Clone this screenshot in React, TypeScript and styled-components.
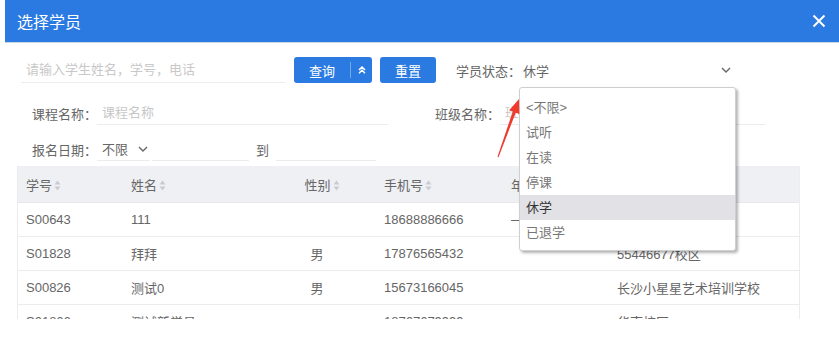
import styled, { createGlobalStyle } from "styled-components";

const GlobalStyle = createGlobalStyle`
  html, body {
    margin: 0;
    background: #fff;
  }
  body {
    font-family: "Liberation Sans", "Noto Sans CJK SC", sans-serif;
    font-size: 13px;
    color: #666;
  }
`;

const BLUE = "#2a7ae2";

const Modal = styled.div`
  position: relative;
  margin-left: 5px;
  height: 342px;
  overflow: hidden;
`;

const Header = styled.div`
  height: 42px;
  background: ${BLUE};
  border-bottom: 1px solid #c9d6e8;
  display: flex;
  align-items: center;
  justify-content: space-between;
  padding: 0 13px 0 12px;
`;

const Title = styled.div`
  color: #fff;
  font-size: 16px;
`;

const CloseBtn = styled.button`
  border: 0;
  background: none;
  padding: 0;
  display: flex;
  cursor: pointer;
`;

const Body = styled.div`
  padding: 14px 39px 0 12px;
`;

const Row = styled.div<{ $top?: number; $h?: number }>`
  display: flex;
  align-items: center;
  height: ${(p) => p.$h ?? 24}px;
  margin-top: ${(p) => p.$top ?? 0}px;
`;

const LineInput = styled.input<{ $w: number; $ml?: number }>`
  box-sizing: border-box;
  width: ${(p) => p.$w}px;
  height: 100%;
  margin-left: ${(p) => p.$ml ?? 0}px;
  border: 0;
  border-bottom: 1px solid #ececec;
  outline: none;
  padding: 0 5px;
  font: inherit;
  color: #666;
  background: transparent;
  &::placeholder {
    color: #c8c8c8;
  }
`;

const Btn = styled.button<{ $w: number; $ml: number }>`
  box-sizing: border-box;
  width: ${(p) => p.$w}px;
  height: 26px;
  margin-left: ${(p) => p.$ml}px;
  border: 0;
  border-radius: 3px;
  background: ${BLUE};
  color: #fff;
  font: inherit;
  display: flex;
  align-items: center;
  justify-content: center;
  padding: 0;
  cursor: pointer;
`;

const BtnText = styled.span`
  flex: 1;
  text-align: center;
`;

const BtnDivider = styled.span`
  width: 1px;
  height: 16px;
  background: rgba(255, 255, 255, 0.35);
`;

const BtnIcon = styled.span`
  width: 21px;
  display: flex;
  justify-content: center;
`;

const StatusLabel = styled.span`
  margin-left: 20px;
  color: #666;
  white-space: nowrap;
`;

const StatusSelect = styled.div`
  width: 218px;
  margin-left: -2px;
  display: flex;
  align-items: center;
  justify-content: space-between;
  padding: 0 6px 0 4px;
  box-sizing: border-box;
  color: #666;
`;

const FieldLabel = styled.span<{ $ml?: number }>`
  width: 80px;
  margin-left: ${(p) => p.$ml ?? 0}px;
  text-align: right;
  white-space: nowrap;
  color: #666;
`;

const DateSelect = styled.div`
  box-sizing: border-box;
  width: 53px;
  height: 100%;
  border-bottom: 1px solid #ececec;
  display: flex;
  align-items: center;
  gap: 10px;
  padding-left: 5px;
`;

const ToText = styled.span`
  margin: 0 7px;
`;

const TableWrap = styled.div`
  margin-top: 5px;
  height: 153px;
  overflow: hidden;
  border-left: 1px solid #ececec;
  border-right: 1px solid #ececec;
`;

const Table = styled.table`
  width: 100%;
  table-layout: fixed;
  border-collapse: collapse;
`;

const Th = styled.th<{ $center?: boolean }>`
  height: 36px;
  background: #eef0f4;
  font-weight: normal;
  color: #666;
  text-align: ${(p) => (p.$center ? "center" : "left")};
  padding: ${(p) => (p.$center ? "0 23px 0 10px" : "0 0 0 8px")};
  border-bottom: 1px solid #e8e8e8;
  white-space: nowrap;
  overflow: hidden;
`;

const Td = styled.td<{ $center?: boolean }>`
  height: 33px;
  text-align: ${(p) => (p.$center ? "center" : "left")};
  padding: ${(p) => (p.$center ? "0 23px 0 0" : "0 0 0 8px")};
  border-bottom: 1px solid #ececec;
  white-space: nowrap;
  overflow: hidden;
  color: #666;
`;

const SortMark = styled.svg`
  margin-left: 2px;
  vertical-align: -1px;
`;

const Dropdown = styled.ul`
  position: absolute;
  left: 514px;
  top: 87px;
  width: 217px;
  box-sizing: border-box;
  margin: 0;
  padding: 7px 0 5px;
  list-style: none;
  background: #fff;
  border: 1px solid #cfcfcf;
  border-radius: 3px;
  box-shadow: 2px 2px 3px rgba(0, 0, 0, 0.3);
`;

const Option = styled.li<{ $active?: boolean }>`
  height: 25px;
  line-height: 25px;
  padding-left: 6px;
  color: ${(p) => (p.$active ? "#333" : "#777")};
  background: ${(p) => (p.$active ? "#e2e1e6" : "transparent")};
`;

const Arrow = styled.svg`
  position: absolute;
  left: 488px;
  top: 95px;
`;

const Chevron = ({ color = "#666" }: { color?: string }) => (
  <svg width="10" height="6" viewBox="0 0 10 6">
    <path d="M1 1 L5 5 L9 1" fill="none" stroke={color} strokeWidth="1.4" />
  </svg>
);

const Sort = () => (
  <SortMark width="7" height="11" viewBox="0 0 7 11">
    <path d="M3.5 0.5 L6.5 4.5 L0.5 4.5 Z" fill="#c8cbd2" />
    <path d="M3.5 10.5 L6.5 6.5 L0.5 6.5 Z" fill="#c8cbd2" />
  </SortMark>
);

const columns = [
  { key: "no", label: "学号", w: 105 },
  { key: "name", label: "姓名", w: 158 },
  { key: "sex", label: "性别", w: 95, center: true },
  { key: "phone", label: "手机号", w: 127 },
  { key: "grade", label: "年级", w: 106 },
  { key: "campus", label: "所属校区" },
] as const;

const rows = [
  { no: "S00643", name: "111", sex: "", phone: "18688886666", grade: "—", campus: "" },
  { no: "S01828", name: "拜拜", sex: "男", phone: "17876565432", grade: "", campus: "55446677校区" },
  { no: "S00826", name: "测试0", sex: "男", phone: "15673166045", grade: "", campus: "长沙小星星艺术培训学校" },
  { no: "S01866", name: "测试新学员", sex: "", phone: "18767679999", grade: "", campus: "华南校区" },
];

const statusOptions = ["<不限>", "试听", "在读", "停课", "休学", "已退学"];

export default function App() {
  return (
    <>
      <GlobalStyle />
      <Modal>
        <Header>
          <Title>选择学员</Title>
          <CloseBtn aria-label="关闭">
            <svg width="14" height="14" viewBox="0 0 14 14">
              <path d="M1.5 1.5 L12.5 12.5 M12.5 1.5 L1.5 12.5" stroke="#fff" strokeWidth="2" />
            </svg>
          </CloseBtn>
        </Header>
        <Body>
          <Row $h={26}>
            <LineInput $w={264} $ml={4} placeholder="请输入学生姓名，学号，电话" />
            <Btn $w={78} $ml={9}>
              <BtnText>查询</BtnText>
              <BtnDivider />
              <BtnIcon>
                <svg width="8" height="8" viewBox="0 0 8 8">
                  <path d="M1 4 L4 1 L7 4 M1 7.3 L4 4.3 L7 7.3" fill="none" stroke="#fff" strokeWidth="1.5" />
                </svg>
              </BtnIcon>
            </Btn>
            <Btn $w={56} $ml={8}>重置</Btn>
            <StatusLabel>学员状态：</StatusLabel>
            <StatusSelect>
              <span>休学</span>
              <Chevron />
            </StatusSelect>
          </Row>
          <Row $top={18}>
            <FieldLabel>课程名称：</FieldLabel>
            <LineInput $w={291} placeholder="课程名称" />
            <FieldLabel $ml={32}>班级名称：</FieldLabel>
            <LineInput $w={265} placeholder="班级名称" />
          </Row>
          <Row $top={12}>
            <FieldLabel>报名日期：</FieldLabel>
            <DateSelect>
              <span>不限</span>
              <Chevron />
            </DateSelect>
            <LineInput $w={97} $ml={2} />
            <ToText>到</ToText>
            <LineInput $w={100} />
          </Row>
          <TableWrap>
            <Table>
              <colgroup>
                {columns.map((c) => (
                  <col key={c.key} style={"w" in c ? { width: c.w } : undefined} />
                ))}
              </colgroup>
              <thead>
                <tr>
                  {columns.map((c) => (
                    <Th key={c.key} $center={"center" in c}>
                      {c.label}
                      <Sort />
                    </Th>
                  ))}
                </tr>
              </thead>
              <tbody>
                {rows.map((r) => (
                  <tr key={r.no}>
                    {columns.map((c) => (
                      <Td key={c.key} $center={"center" in c}>
                        {r[c.key]}
                      </Td>
                    ))}
                  </tr>
                ))}
              </tbody>
            </Table>
          </TableWrap>
        </Body>

        <Dropdown>
          {statusOptions.map((o) => (
            <Option key={o} $active={o === "休学"}>
              {o}
            </Option>
          ))}
        </Dropdown>

        <Arrow width="32" height="66" viewBox="0 0 32 66">
          <polygon
            points="4.5,61.8 19.8,16.6 16.2,15.2 26,4 26.3,19 22.7,17.7 5.5,62.2"
            fill="#f03a2e"
          />
        </Arrow>
      </Modal>
    </>
  );
}
